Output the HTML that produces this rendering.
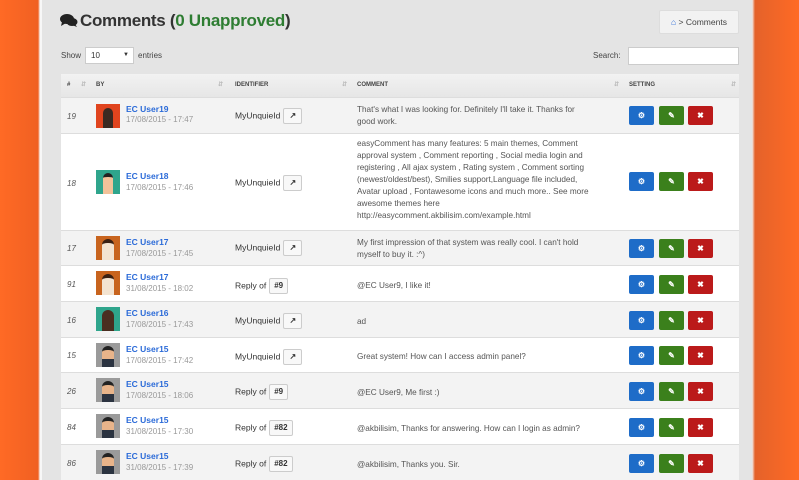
<!DOCTYPE html>
<html><head><meta charset="utf-8"><style>
*{margin:0;padding:0;box-sizing:border-box}
body{width:799px;height:480px;overflow:hidden;background:linear-gradient(90deg,#ff6a25 0,#f06022 38px,#f7f7f7 40px,#f7f7f7 42px,#e4e4e4 42px,#e4e4e4 752px,#f0f0f0 752px,#e4622a 755px,#ff6a25 799px);font-family:"Liberation Sans",sans-serif;position:relative}
.a{position:absolute}
h1{position:absolute;left:80px;top:11px;font-size:17px;font-weight:bold;color:#333;letter-spacing:-0.3px}
h1 span{color:#2e7d32}
.bc{left:659px;top:10px;width:80px;height:24px;background:#f2f2f2;border:1px solid #ddd;border-radius:2px;font-size:8.5px;color:#444;line-height:22px;text-align:center}
.sm{font-size:8px;color:#444}
.row{position:absolute;left:61px;width:678px;border-top:1px solid #ddd}
.g{background:#f3f3f3}.w{background:#fff}
.num{position:absolute;left:6px;font-size:8px;font-style:italic;color:#555}
.av{position:absolute;left:35px;width:24px;height:24px}
.nm{position:absolute;left:65px;font-size:8.5px;color:#2a6ad8;font-weight:bold}
.dt{position:absolute;left:65px;font-size:8px;color:#999}
.id{position:absolute;left:174px;font-size:8.5px;color:#333}
.bx{display:inline-block;vertical-align:middle;margin-left:3px;height:16px;min-width:19px;padding:0 4px;border:1px solid #ccc;border-radius:2px;background:#f8f8f8;font-size:8px;line-height:14px;text-align:center;font-weight:bold;color:#333}
.cm{position:absolute;left:296px;font-size:8.2px;color:#555;line-height:12px}
.bt{position:absolute;width:25px;height:19px;border-radius:2px;color:#fff;font-size:8px;font-weight:bold;text-align:center;line-height:19px}
.b1{left:568px;background:#1e6cc8}.b2{left:598px;background:#3b801c}.b3{left:627px;background:#bb1a1a}
</style></head><body>
<svg class="a" style="left:60px;top:13px" width="18" height="15" viewBox="0 0 18 15"><ellipse cx="7" cy="6" rx="7" ry="5" fill="#222"/><path d="M2 9 L1 13 L6 10Z" fill="#222"/><ellipse cx="12" cy="9" rx="5.5" ry="4" fill="#222"/><path d="M15 11 L17 14 L12 12Z" fill="#222"/></svg>
<h1>Comments (<span>0 Unapproved</span>)</h1>
<div class="a bc"><span style="color:#2a6ad8">&#8962;</span> &gt; Comments</div>
<div class="a sm" style="left:61px;top:51px">Show</div>
<div class="a" style="left:85px;top:47px;width:49px;height:17px;background:#fff;border:1px solid #ccc;font-size:8px;line-height:15px;padding-left:5px;color:#333">10<span style="position:absolute;right:4px;font-size:6px">&#9660;</span></div>
<div class="a sm" style="left:138px;top:51px">entries</div>
<div class="a sm" style="left:593px;top:51px">Search:</div>
<div class="a" style="left:628px;top:47px;width:111px;height:18px;background:#fff;border:1px solid #ccc"></div>
<div class="row" style="top:74px;height:23px;background:linear-gradient(#f2f2f2,#e6e6e6);border:none;font-size:6px;font-weight:bold;color:#444">
<span class="a" style="left:6px;top:8px">#</span><span class="a" style="left:35px;top:8px">BY</span><span class="a" style="left:174px;top:8px">IDENTIFIER</span><span class="a" style="left:296px;top:8px">COMMENT</span><span class="a" style="left:568px;top:8px">SETTING</span>
<span class="a" style="left:20px;top:7px;color:#bbb">&#8693;</span><span class="a" style="left:157px;top:7px;color:#bbb">&#8693;</span><span class="a" style="left:281px;top:7px;color:#bbb">&#8693;</span><span class="a" style="left:553px;top:7px;color:#bbb">&#8693;</span><span class="a" style="left:670px;top:7px;color:#bbb">&#8693;</span>
</div>

<div class="row g" style="top:97px;height:36px"><span class="num" style="top:14px">19</span><div class="av" style="top:6px;background:#e0441e"><div style="margin:4px auto 0;width:10px;height:20px;background:#3a2a22;border-radius:5px 5px 0 0"></div></div><span class="nm" style="top:6px">EC User19</span><span class="dt" style="top:17px">17/08/2015 - 17:47</span><span class="id" style="top:10px">MyUnquieId<span class="bx">&#8599;</span></span><div class="cm" style="top:6px">That's what I was looking for. Definitely I'll take it. Thanks for<br>good work.</div><div class="bt b1" style="top:8px">&#9881;</div><div class="bt b2" style="top:8px">&#9998;</div><div class="bt b3" style="top:8px">&#10006;</div></div>

<div class="row w" style="top:133px;height:97px"><span class="num" style="top:45px">18</span><div class="av" style="top:36px;background:#2fa58c"><div style="margin:3px auto 0;width:10px;height:21px;background:#f2c29a;border-radius:5px 5px 0 0;border-top:4px solid #222"></div></div><span class="nm" style="top:37px">EC User18</span><span class="dt" style="top:49px">17/08/2015 - 17:46</span><span class="id" style="top:41px">MyUnquieId<span class="bx">&#8599;</span></span><div class="cm" style="top:4px">easyComment has many features: 5 main themes, Comment<br>approval system , Comment reporting , Social media login and<br>registering , All ajax system , Rating system , Comment sorting<br>(newest/oldest/best), Smilies support,Language file included,<br>Avatar upload , Fontawesome icons and much more.. See more<br>awesome themes here<br>http://easycomment.akbilisim.com/example.html</div><div class="bt b1" style="top:38px">&#9881;</div><div class="bt b2" style="top:38px">&#9998;</div><div class="bt b3" style="top:38px">&#10006;</div></div>

<div class="row g" style="top:230px;height:35px"><span class="num" style="top:13px">17</span><div class="av" style="top:5px;background:#c8641e"><div style="margin:3px auto 0;width:12px;height:21px;background:#f3e3d0;border-radius:6px 6px 0 0;border-top:4px solid #3a2012"></div></div><span class="nm" style="top:6px">EC User17</span><span class="dt" style="top:18px">17/08/2015 - 17:45</span><span class="id" style="top:9px">MyUnquieId<span class="bx">&#8599;</span></span><div class="cm" style="top:6px">My first impression of that system was really cool. I can't hold<br>myself to buy it. :^)</div><div class="bt b1" style="top:8px">&#9881;</div><div class="bt b2" style="top:8px">&#9998;</div><div class="bt b3" style="top:8px">&#10006;</div></div>

<div class="row w" style="top:265px;height:36px"><span class="num" style="top:14px">91</span><div class="av" style="top:5px;background:#c8641e"><div style="margin:3px auto 0;width:12px;height:21px;background:#f3e3d0;border-radius:6px 6px 0 0;border-top:4px solid #3a2012"></div></div><span class="nm" style="top:6px">EC User17</span><span class="dt" style="top:18px">31/08/2015 - 18:02</span><span class="id" style="top:12px">Reply of<span class="bx">#9</span></span><div class="cm" style="top:14px">@EC User9, I like it!</div><div class="bt b1" style="top:9px">&#9881;</div><div class="bt b2" style="top:9px">&#9998;</div><div class="bt b3" style="top:9px">&#10006;</div></div>

<div class="row g" style="top:301px;height:36px"><span class="num" style="top:14px">16</span><div class="av" style="top:5px;background:#2fa58c"><div style="margin:3px auto 0;width:12px;height:21px;background:#4a2e20;border-radius:6px 6px 0 0"></div></div><span class="nm" style="top:6px">EC User16</span><span class="dt" style="top:18px">17/08/2015 - 17:43</span><span class="id" style="top:11px">MyUnquieId<span class="bx">&#8599;</span></span><div class="cm" style="top:14px">ad</div><div class="bt b1" style="top:9px">&#9881;</div><div class="bt b2" style="top:9px">&#9998;</div><div class="bt b3" style="top:9px">&#10006;</div></div>

<div class="row w" style="top:337px;height:35px"><span class="num" style="top:13px">15</span><div class="av" style="top:5px;background:#9a9a9a"><div style="margin:3px auto 0;width:12px;height:21px;background:#e8b48a;border-radius:6px 6px 0 0;border-top:4px solid #222;border-bottom:8px solid #2b3340"></div></div><span class="nm" style="top:6px">EC User15</span><span class="dt" style="top:18px">17/08/2015 - 17:42</span><span class="id" style="top:11px">MyUnquieId<span class="bx">&#8599;</span></span><div class="cm" style="top:13px">Great system! How can I access admin panel?</div><div class="bt b1" style="top:8px">&#9881;</div><div class="bt b2" style="top:8px">&#9998;</div><div class="bt b3" style="top:8px">&#10006;</div></div>

<div class="row g" style="top:372px;height:36px"><span class="num" style="top:14px">26</span><div class="av" style="top:5px;background:#9a9a9a"><div style="margin:3px auto 0;width:12px;height:21px;background:#e8b48a;border-radius:6px 6px 0 0;border-top:4px solid #222;border-bottom:8px solid #2b3340"></div></div><span class="nm" style="top:6px">EC User15</span><span class="dt" style="top:18px">17/08/2015 - 18:06</span><span class="id" style="top:11px">Reply of<span class="bx">#9</span></span><div class="cm" style="top:14px">@EC User9, Me first :)</div><div class="bt b1" style="top:9px">&#9881;</div><div class="bt b2" style="top:9px">&#9998;</div><div class="bt b3" style="top:9px">&#10006;</div></div>

<div class="row w" style="top:408px;height:36px"><span class="num" style="top:14px">84</span><div class="av" style="top:5px;background:#9a9a9a"><div style="margin:3px auto 0;width:12px;height:21px;background:#e8b48a;border-radius:6px 6px 0 0;border-top:4px solid #222;border-bottom:8px solid #2b3340"></div></div><span class="nm" style="top:6px">EC User15</span><span class="dt" style="top:18px">31/08/2015 - 17:30</span><span class="id" style="top:11px">Reply of<span class="bx">#82</span></span><div class="cm" style="top:14px">@akbilisim, Thanks for answering. How can I login as admin?</div><div class="bt b1" style="top:9px">&#9881;</div><div class="bt b2" style="top:9px">&#9998;</div><div class="bt b3" style="top:9px">&#10006;</div></div>

<div class="row g" style="top:444px;height:36px"><span class="num" style="top:14px">86</span><div class="av" style="top:5px;background:#9a9a9a"><div style="margin:3px auto 0;width:12px;height:21px;background:#e8b48a;border-radius:6px 6px 0 0;border-top:4px solid #222;border-bottom:8px solid #2b3340"></div></div><span class="nm" style="top:6px">EC User15</span><span class="dt" style="top:18px">31/08/2015 - 17:39</span><span class="id" style="top:11px">Reply of<span class="bx">#82</span></span><div class="cm" style="top:14px">@akbilisim, Thanks you. Sir.</div><div class="bt b1" style="top:9px">&#9881;</div><div class="bt b2" style="top:9px">&#9998;</div><div class="bt b3" style="top:9px">&#10006;</div></div>
</body></html>
